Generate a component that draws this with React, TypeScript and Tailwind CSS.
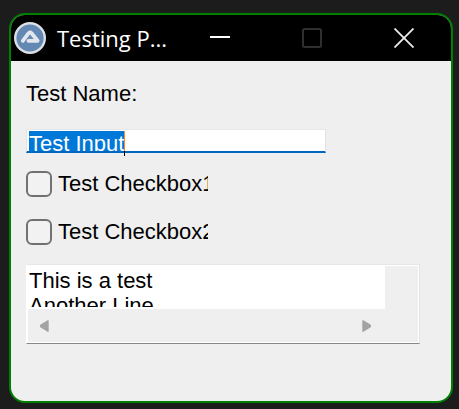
import { useEffect, useRef, useState } from 'react'

const CHECKBOXES = [
  { id: 'checkbox1', label: 'Test Checkbox1' },
  { id: 'checkbox2', label: 'Test Checkbox2' },
]

const EDIT_TEXT = 'This is a test\nAnother Line'

function AppIcon() {
  return (
    <svg viewBox="0 0 32 32" className="size-8 shrink-0" aria-hidden="true">
      <circle cx="16" cy="16" r="16" fill="#dcdfe4" />
      <circle cx="16" cy="16" r="13.6" fill="#6388b4" />
      <path
        d="M8.8 18.8L14.6 11.2Q16.1 9.6 17.6 11.2L23.6 18.8H14.5"
        fill="none"
        stroke="#e3e7ed"
        strokeWidth="3.8"
        strokeLinejoin="round"
        strokeLinecap="round"
      />
    </svg>
  )
}

function TitleBar() {
  return (
    <header className="flex h-[46px] items-center bg-black pl-[3px] pr-[37px] text-white">
      <AppIcon />
      <h1 className="ml-[11px] whitespace-nowrap font-['Open_Sans','Noto_Sans',sans-serif] text-[22px] leading-8">
        Testing P...
      </h1>
      <div className="ml-auto flex gap-[72px]">
        <button type="button" aria-label="Minimize">
          <svg viewBox="0 0 20 20" className="size-5">
            <path d="M0 9H20" stroke="#fff" strokeWidth="2" />
          </svg>
        </button>
        <button type="button" aria-label="Maximize" disabled>
          <svg viewBox="0 0 20 20" className="size-5">
            <rect x="1" y="1" width="18" height="18" rx="1.5" fill="none" stroke="#2f2f2f" strokeWidth="2" />
          </svg>
        </button>
        <button type="button" aria-label="Close">
          <svg viewBox="0 0 20 20" className="size-5">
            <path d="M0.5 0.5L19.5 19.5M19.5 0.5L0.5 19.5" stroke="#ececec" strokeWidth="1.8" />
          </svg>
        </button>
      </div>
    </header>
  )
}

function NameField() {
  const inputRef = useRef<HTMLInputElement>(null)

  // The whole value starts out selected
  useEffect(() => {
    inputRef.current?.focus()
    inputRef.current?.select()
  }, [])

  return (
    <div>
      <label htmlFor="test-name" className="block leading-[26px]">
        Test Name:
      </label>
      <div className="relative mt-[22px] max-w-[300px]">
        <div className="h-6 overflow-clip border-x border-t border-b-2 border-x-[#e3e3e3] border-t-[#e8e8e8] border-b-[#0067c0] bg-white pt-px">
          <input
            id="test-name"
            ref={inputRef}
            type="text"
            defaultValue="Test Input"
            className="block h-[26px] w-full bg-white pl-0.5 leading-[26px] outline-none selection:bg-[#0078d7] selection:text-white"
          />
        </div>
        {/* Text caret */}
        <span className="absolute left-[98px] top-0.5 h-[25px] w-px bg-linear-to-b from-[#ff8728] from-80% to-black to-80%" />
      </div>
    </div>
  )
}

function CheckboxRow({ id, label }: { id: string; label: string }) {
  return (
    <div className="flex w-[182px] items-center gap-1.5 overflow-hidden">
      <input
        id={id}
        type="checkbox"
        className="size-[26px] shrink-0 appearance-none rounded-md border-2 border-[#717171] bg-[#f2f2f2] checked:bg-[#0067c0]"
      />
      <label htmlFor={id} className="whitespace-nowrap leading-[26px]">
        {label}
      </label>
    </div>
  )
}

function EditBox() {
  const [text, setText] = useState(EDIT_TEXT)

  return (
    <div className="mr-4 border border-b-[#868686] border-l-white border-r-[#e3e3e3] border-t-[#e6e6e6]">
      <div className="border border-white">
        <div className="mr-[33px] bg-white pb-0.5">
          <textarea
            aria-label="Test text"
            value={text}
            onChange={(e) => setText(e.target.value)}
            className="block h-[41px] w-full resize-none overflow-hidden whitespace-pre bg-white pl-px pt-0.5 leading-[25px] outline-none"
          />
        </div>
        {/* Horizontal scroll bar */}
        <div className="mr-[33px] flex h-[33px] items-center justify-between pl-3 pr-3.5">
          <button type="button" aria-label="Scroll left">
            <svg viewBox="0 0 9 12" className="h-3 w-[9px]">
              <path d="M8 0.8V11.2L1 7Q0 6 1 5Z" fill="#a3a3a3" stroke="#a3a3a3" strokeWidth="1.4" strokeLinejoin="round" />
            </svg>
          </button>
          <button type="button" aria-label="Scroll right">
            <svg viewBox="0 0 9 12" className="h-3 w-[9px]">
              <path d="M1 0.8V11.2L8 7Q9 6 8 5Z" fill="#a3a3a3" stroke="#a3a3a3" strokeWidth="1.4" strokeLinejoin="round" />
            </svg>
          </button>
        </div>
      </div>
    </div>
  )
}

export default function App() {
  return (
    <div className="flex min-h-screen flex-col bg-[#1c1c1c] pb-1.5 pl-[9px] pr-1.5 pt-[13px]">
      <div className="flex grow flex-col overflow-hidden rounded-2xl border-2 border-[#008000] bg-[#efefef]">
        <TitleBar />
        <main className="flex flex-col px-[15px] pt-5 font-['Liberation_Sans',Arial,sans-serif] text-[22px] text-black">
          <NameField />
          <div className="mb-[19px] mt-[18px] flex flex-col gap-[22px]">
            {CHECKBOXES.map((box) => (
              <CheckboxRow key={box.id} id={box.id} label={box.label} />
            ))}
          </div>
          <EditBox />
        </main>
      </div>
    </div>
  )
}
